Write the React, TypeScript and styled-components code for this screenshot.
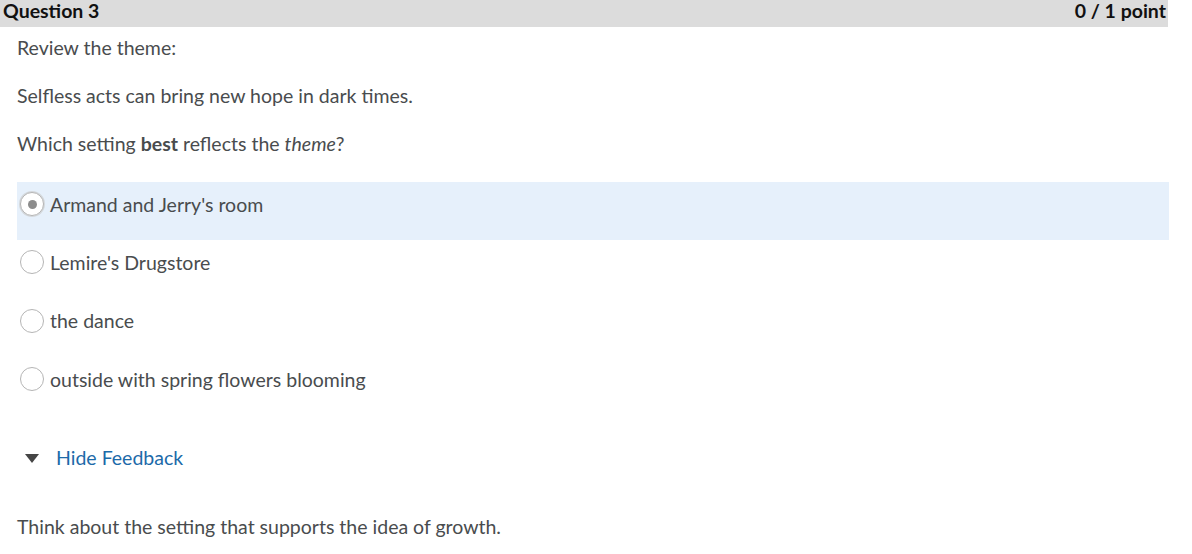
import React from "react";
import styled, { createGlobalStyle } from "styled-components";

const GlobalStyle = createGlobalStyle`
  body {
    margin: 0;
    background: #ffffff;
    font-family: Lato, "Open Sans", sans-serif;
    color: #494c4e;
  }
`;

const Page = styled.div`
  width: 1192px;
  height: 554px;
  overflow: hidden;
`;

const Header = styled.div`
  width: 1168px;
  height: 27px;
  background: #dcdcdc;
  display: flex;
  justify-content: space-between;
  align-items: flex-start;
  padding: 0 2px 0 3px;
  box-sizing: border-box;
  font-size: 19.5px;
  line-height: 22px;
  font-weight: 700;
  color: #111111;
`;

const Body = styled.div`
  padding: 0 23px 0 17px;
`;

const Prompt = styled.div`
  display: flex;
  flex-direction: column;
  gap: 6px;
`;

const Para = styled.p`
  margin: 0;
  font-size: 19.5px;
  line-height: 42px;
`;

const Options = styled.div`
  margin-top: 17px;
  display: flex;
  flex-direction: column;
`;

const Option = styled.label<{ $selected?: boolean }>`
  display: flex;
  align-items: center;
  gap: 6px;
  height: 58px;
  padding: 0 0 14px 3px;
  box-sizing: border-box;
  background: ${(p) => (p.$selected ? "#e6f0fb" : "transparent")};
  font-size: 19.5px;
  margin-bottom: 0.4px;
`;

const Radio = styled.span<{ $checked?: boolean }>`
  width: 24px;
  height: 24px;
  border-radius: 50%;
  border: 1px solid #b5b5b5;
  background: #ffffff;
  box-sizing: border-box;
  display: flex;
  align-items: center;
  justify-content: center;
  box-shadow: ${(p) => (p.$checked ? "0 0 0 1px #d4d8dc" : "none")};

  &::after {
    content: "";
    width: 9px;
    height: 9px;
    border-radius: 50%;
    background: #8c8c8c;
    display: ${(p) => (p.$checked ? "block" : "none")};
  }
`;

const FeedbackToggle = styled.div`
  margin-top: 25px;
  display: flex;
  align-items: center;
  gap: 17px;
  padding-left: 8px;
  font-size: 19.5px;
  color: #1c6aa9;
  height: 34px;
`;

const Caret = styled.span`
  width: 0;
  height: 0;
  border-left: 7.5px solid transparent;
  border-right: 7.5px solid transparent;
  border-top: 9px solid #454545;
  margin-top: 2px;
`;

const Feedback = styled.p`
  margin: 35px 0 0;
  font-size: 19.5px;
  line-height: 34px;
`;

const choices = [
  "Armand and Jerry's room",
  "Lemire's Drugstore",
  "the dance",
  "outside with spring flowers blooming",
];

export default function App() {
  return (
    <Page>
      <GlobalStyle />
      <Header>
        <span>Question 3</span>
        <span>0 / 1 point</span>
      </Header>
      <Body>
        <Prompt>
          <Para>Review the theme:</Para>
          <Para>Selfless acts can bring new hope in dark times.</Para>
          <Para>
            Which setting <b>best</b> reflects the <i>theme</i>?
          </Para>
        </Prompt>
        <Options>
          {choices.map((c, i) => (
            <Option key={c} $selected={i === 0}>
              <Radio $checked={i === 0} />
              {c}
            </Option>
          ))}
        </Options>
        <FeedbackToggle>
          <Caret />
          Hide Feedback
        </FeedbackToggle>
        <Feedback>Think about the setting that supports the idea of growth.</Feedback>
      </Body>
    </Page>
  );
}
